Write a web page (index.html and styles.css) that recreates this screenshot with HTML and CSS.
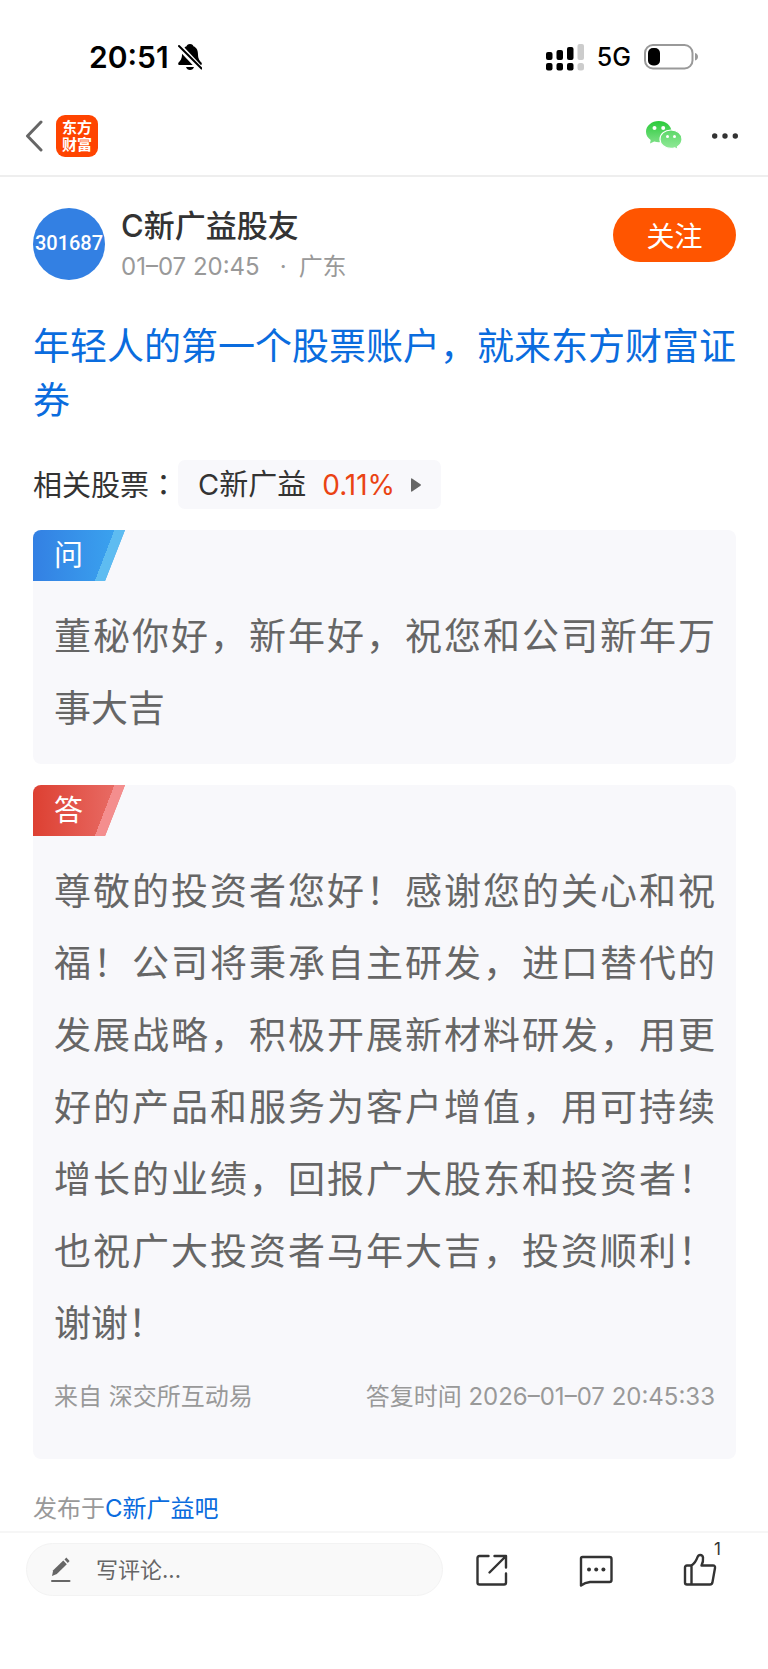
FILE: index.html
```html
<!DOCTYPE html>
<html lang="zh-CN">

<head>
    <meta charset="UTF-8">
    <meta name="viewport" content="width=device-width, initial-scale=1.0">
    <title>C新广益股友</title>
    <link rel="stylesheet" href="styles.css">
</head>

<body>
    <div class="status-bar">
        <div class="status-left">
            <span class="clock">20:51</span>
            <svg class="bell" viewBox="0 0 24 26" aria-hidden="true">
                <path d="M12 0C9.8 0 8.8 1.2 8.6 2.2C5 3.6 4 7 4 10.5C4 15 2 17 .6 18.6C-.2 19.6.2 21 1.6 21H22.4C23.8 21 24.2 19.6 23.4 18.6C22 17 20 15 20 10.5C20 7 19 3.6 15.4 2.2C15.2 1.2 14.2 0 12 0Z" />
                <path d="M8 23H16C15.4 25 14 26 12 26S8.6 25 8 23Z" />
                <path d="M-1 0L23 25.5" stroke="#fff" stroke-width="6" />
                <path d="M1 2L23.5 24.5" stroke="#000" stroke-width="2" stroke-linecap="round" />
            </svg>
        </div>
        <div class="status-right">
            <svg class="signal" viewBox="0 0 38 27" aria-hidden="true">
                <rect x="0" y="8" width="6.5" height="8" rx="2" />
                <rect x="10.5" y="6" width="6.5" height="10" rx="2" />
                <rect x="21" y="3" width="6.5" height="13" rx="2" />
                <rect x="31.5" y="0" width="6.5" height="16" rx="2" fill="#ccc" />
                <rect x="0" y="19" width="6.5" height="7.5" rx="2" />
                <rect x="10.5" y="19" width="6.5" height="7.5" rx="2" />
                <rect x="21" y="19" width="6.5" height="7.5" rx="2" />
                <rect x="31.5" y="19" width="6.5" height="7.5" rx="2.5" fill="#ccc" />
            </svg>
            <span class="network">5G</span>
            <svg class="battery" viewBox="0 0 54 26" aria-hidden="true">
                <rect x="1" y="1" width="47.5" height="23.5" rx="8" fill="none" stroke="#999" stroke-width="2" />
                <rect x="4" y="4" width="12" height="17.5" rx="5" />
                <path d="M51 9C53 9.5 54 11 54 12.800S53 16 51 16.6Z" fill="#999" />
            </svg>
        </div>
    </div>

    <header class="nav-bar">
        <div class="nav-group">
            <a href="#" class="back" aria-label="返回">
                <svg viewBox="0 0 18 32" aria-hidden="true">
                    <path d="M16 2L2.5 16L16 30" fill="none" stroke="#666" stroke-width="3" stroke-linecap="round" stroke-linejoin="round" />
                </svg>
            </a>
            <div class="app-logo">东方<br>财富</div>
        </div>
        <div class="nav-group">
            <button type="button" class="icon-btn wechat" aria-label="微信">
                <svg viewBox="0 0 36 29" aria-hidden="true">
                    <defs>
                        <linearGradient id="wx" x1="0" y1="0" x2="0" y2="1">
                            <stop offset="0" stop-color="#2acb3a" />
                            <stop offset="1" stop-color="#7fe088" />
                        </linearGradient>
                        <linearGradient id="wx2" x1="0" y1="0" x2="0" y2="1">
                            <stop offset="0" stop-color="#5bd767" />
                            <stop offset="1" stop-color="#93ea9a" />
                        </linearGradient>
                    </defs>
                    <path d="M12.8 0C5.7 0 0 4.8 0 10.7C0 14.2 1.8 17 4.7 18.9L4 22.5L8.2 20.4C9.7 20.9 11.2 21.2 12.8 21.2C19.8 21.2 25.5 16.5 25.5 10.6S19.8 0 12.8 0Z" fill="url(#wx)" />
                    <path d="M25 9C18.8 9 14 13 14 18.2S18.8 27.4 25 27.4C26.3 27.4 27.6 27.2 28.8 26.8L32 28.5L31.5 25.7C34.3 24 36 21.3 36 18.2C36 13 31.2 9 25 9Z" fill="url(#wx2)" stroke="#fff" stroke-width="1.2" />
                    <g fill="#fff">
                        <circle cx="8.5" cy="7" r="2" />
                        <circle cx="17.2" cy="7" r="2" />
                        <circle cx="21.5" cy="15.5" r="1.5" />
                        <circle cx="28.5" cy="15.5" r="1.5" />
                    </g>
                </svg>
            </button>
            <button type="button" class="icon-btn more" aria-label="更多">
                <svg viewBox="0 0 26 6" aria-hidden="true">
                    <circle cx="2.7" cy="3" r="2.7" />
                    <circle cx="13" cy="3" r="2.7" />
                    <circle cx="23.3" cy="3" r="2.7" />
                </svg>
            </button>
        </div>
    </header>

    <main class="post">
        <section class="author">
            <div class="avatar">301687</div>
            <div class="author-info">
                <div class="author-name">C新广益股友</div>
                <div class="author-meta"><span>01–07 20:45</span><span class="dot">·</span><span>广东</span></div>
            </div>
            <button type="button" class="follow">关注</button>
        </section>

        <h1 class="title"><a href="#">年轻人的第一个股票账户，就来东方财富证券</a></h1>

        <div class="related">
            <span>相关股票<span class="colon" lang="zh-TW">：</span></span>
            <a href="#" class="stock">
                <span>C新广益</span>
                <span class="change">0.11%</span>
                <svg viewBox="0 0 10 14" aria-hidden="true">
                    <path d="M0 1Q0 0 1 .5L9.5 6.3Q10.3 7 9.5 7.7L1 13.5Q0 14 0 13Z" fill="#666" />
                </svg>
            </a>
        </div>

        <section class="card question">
            <div class="tag">问</div>
            <p class="card-text">董秘你好，新年好，祝您和公司新年万事大吉</p>
        </section>

        <section class="card answer">
            <div class="tag">答</div>
            <p class="card-text">尊敬的投资者您好！感谢您的关心和祝福！公司将秉承自主研发，进口替代的发展战略，积极开展新材料研发，用更好的产品和服务为客户增值，用可持续增长的业绩，回报广大股东和投资者！也祝广大投资者马年大吉，投资顺利！谢谢！</p>
            <div class="card-footer">
                <span>来自 深交所互动易</span>
                <span>答复时间 2026–01–07 20:45:33</span>
            </div>
        </section>

        <p class="published">发布于<a href="#">C新广益吧</a></p>
    </main>

    <footer class="bottom-bar">
        <label class="comment-box">
            <svg viewBox="0 0 20 26" aria-hidden="true">
                <path d="M1 19L2.2 13.3L12.3 3.6L15.8 7.2L5.8 17Z" fill="#666" />
                <path d="M13.5 2.4L15.3 .6L18.6 4L16.8 5.9Z" fill="#666" />
                <path d="M1 24H18.5" stroke="#666" stroke-width="2" stroke-linecap="round" />
            </svg>
            <input type="text" placeholder="写评论..." aria-label="写评论">
        </label>
        <div class="actions">
            <button type="button" class="icon-btn" aria-label="分享">
                <svg viewBox="0 0 34 34" aria-hidden="true">
                    <path d="M13.5 3H4.5Q2.5 3 2.5 5V29.5Q2.5 31.5 4.5 31.5H29Q31 31.5 31 29.5V20.5" />
                    <path d="M19.5 3H31V14.5M31 3L14.5 19.5" />
                </svg>
            </button>
            <button type="button" class="icon-btn" aria-label="评论">
                <svg viewBox="0 0 34 34" aria-hidden="true">
                    <path d="M3.5 4H30.5Q32.5 4 32.5 6V27Q32.5 29 30.5 29H11Q6 29.5 2 32.5V5.5Q2 4 3.5 4Z" />
                    <g fill="#333" stroke="none">
                        <circle cx="10" cy="16.5" r="2" />
                        <circle cx="17.2" cy="16.5" r="2" />
                        <circle cx="24.4" cy="16.5" r="2" />
                    </g>
                </svg>
            </button>
            <button type="button" class="icon-btn like" aria-label="点赞">
                <svg viewBox="0 0 34 34" aria-hidden="true">
                    <path d="M8 12.5H4Q2 12.5 2 14.5V29.5Q2 31.5 4 31.5H27Q29 31.5 29.4 29.6L32 15Q32.4 12.5 30 12.5H18.5Q20.5 8.5 20 4.5Q19.6 2 17.2 2Q15.3 2 14.5 4.2Q12.5 10 8.5 12.5V31.5" />
                </svg>
                <span class="count">1</span>
            </button>
        </div>
    </footer>
</body>

</html>
```

FILE: styles.css
```css
* {
    box-sizing: border-box;
}

body {
    margin: 0;
    min-height: 100vh;
    display: flex;
    flex-direction: column;
    background-color: #fff;
    color: #333;
    font-family: Inter, "Noto Sans CJK SC", sans-serif;
}

a {
    color: inherit;
    text-decoration: none;
}

button {
    font: inherit;
    border: none;
    padding: 0;
    cursor: pointer;
}

svg {
    display: block;
    flex: none;
}

/* Status bar */
.status-bar {
    display: flex;
    justify-content: space-between;
    align-items: center;
    height: 96px;
    padding: 18px 70px 0 89px;
    color: #000;
}

.status-left,
.status-right {
    display: flex;
    align-items: center;
}

.status-left {
    gap: 9px;
}

.status-right {
    gap: 13px;
}

.clock {
    font-size: 30px;
    font-weight: 600;
}

.network {
    font-size: 25px;
    font-weight: 500;
}

.bell {
    width: 24px;
    height: 26px;
}

.signal {
    width: 38px;
    height: 27px;
}

.battery {
    width: 54px;
    height: 26px;
}

/* Navigation */
.nav-bar {
    display: flex;
    justify-content: space-between;
    align-items: center;
    height: 81px;
    padding: 0 30px 0 25px;
    border-bottom: 2px solid #eee;
}

.nav-group {
    display: flex;
    align-items: center;
    gap: 30px;
}

.nav-group:first-child {
    gap: 13px;
}

.back svg {
    width: 18px;
    height: 32px;
}

.app-logo {
    width: 42px;
    height: 42px;
    padding-top: 4px;
    border-radius: 9px;
    background-color: #ff4400;
    color: #fff;
    font-size: 15px;
    font-weight: 700;
    line-height: 17px;
    text-align: center;
}

.icon-btn {
    background: none;
}

.wechat svg {
    width: 36px;
    height: 29px;
}

.more svg {
    width: 26px;
    height: 6px;
    fill: #333;
}

/* Post */
.post {
    flex: 1;
    padding: 31px 32px 0 33px;
}

.author {
    display: flex;
    align-items: flex-start;
    gap: 16px;
}

.avatar {
    flex: none;
    width: 72px;
    height: 72px;
    border-radius: 50%;
    background-color: #3380e3;
    color: #fff;
    font-family: Roboto, sans-serif;
    font-size: 20px;
    font-weight: 500;
    line-height: 70px;
    text-align: center;
}

.author-info {
    flex: 1;
}

.author-name {
    font-size: 31px;
    font-weight: 500;
    line-height: 36px;
}

.author-meta {
    display: flex;
    color: #999;
    font-size: 24px;
    line-height: 46px;
}

.dot {
    margin: 0 12px 0 20px;
}

.follow {
    width: 123px;
    height: 54px;
    border-radius: 27px;
    background-color: #ff5500;
    color: #fff;
    font-size: 28px;
}

.title {
    margin: 30px 0 0;
    color: #0a6cde;
    font-size: 37px;
    font-weight: 400;
    line-height: 54px;
}

.related {
    display: flex;
    align-items: center;
    margin-top: 32px;
    font-size: 29px;
    line-height: 40px;
}

.colon {
    font-family: "Noto Sans CJK TC", sans-serif;
}

.stock {
    display: flex;
    align-items: center;
    gap: 16px;
    height: 49px;
    padding: 0 20px;
    border-radius: 7px;
    background-color: #f8f8fb;
}

.stock svg {
    width: 10px;
    height: 14px;
}

.change {
    color: #ea4313;
    font-size: 28px;
}

.card {
    margin-top: 21px;
    border-radius: 8px;
    background-color: #f8f8fb;
    overflow: hidden;
}

.tag {
    width: 92px;
    height: 51px;
    padding-left: 21px;
    color: #fff;
    font-size: 29px;
    line-height: 51px;
    clip-path: polygon(0 0, 100% 0, 72px 100%, 0 100%);
}

.question .tag {
    background: linear-gradient(111deg, transparent 76px, #5ebcf1 76px), linear-gradient(90deg, #3380e3, #3ba6f0);
}

.answer .tag {
    background: linear-gradient(111deg, transparent 76px, #f48e8e 76px), linear-gradient(90deg, #dd4032, #e9706a);
}

.card-text {
    margin: 0;
    padding: 20px 21px 19px;
    color: #666;
    font-size: 37px;
    line-height: 72px;
    text-align: justify;
}

.card-footer {
    display: flex;
    justify-content: space-between;
    padding: 0 21px 44px;
    color: #999;
    font-size: 24px;
    line-height: 36px;
}

.published {
    margin: 0;
    padding: 32px 0 4px;
    color: #999;
    font-size: 24px;
    line-height: 36px;
}

.published a {
    color: #0a6cde;
}

/* Bottom bar */
.bottom-bar {
    display: flex;
    align-items: center;
    gap: 32px;
    padding: 10px 51px 73px 26px;
    border-top: 2px solid #f6f6f6;
}

.comment-box {
    flex: 1;
    min-width: 0;
    display: flex;
    align-items: center;
    gap: 25px;
    height: 53px;
    padding: 0 24px;
    border: 1px solid #f3f3f3;
    border-radius: 27px;
    background-color: #f9f9f9;
}

.comment-box svg {
    width: 20px;
    height: 26px;
}

.comment-box input {
    flex: 1;
    min-width: 0;
    padding: 0;
    border: none;
    outline: none;
    background: none;
    color: #333;
    font: inherit;
    font-size: 22px;
}

.comment-box input::placeholder {
    color: #666;
    opacity: 1;
}

.actions {
    display: flex;
    gap: 70px;
}

.actions svg {
    width: 34px;
    height: 34px;
    fill: none;
    stroke: #333;
    stroke-width: 2.4;
    stroke-linejoin: round;
    stroke-linecap: round;
}

.like {
    position: relative;
}

.count {
    position: absolute;
    top: -14px;
    right: -4px;
    color: #333;
    font-size: 17px;
    line-height: 20px;
}
```
